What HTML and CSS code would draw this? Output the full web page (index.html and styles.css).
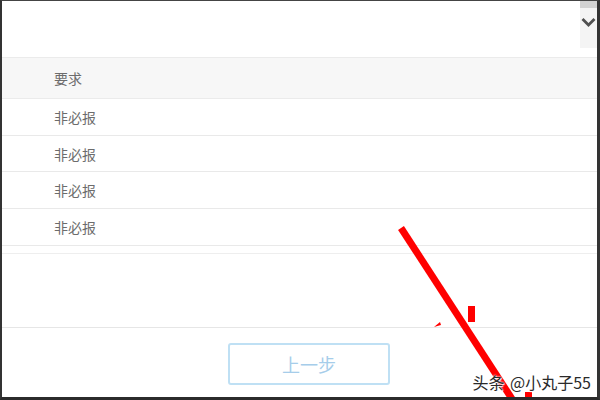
FILE: index.html
```html
<html>
	<head>
		<meta charset="utf-8">
		<link rel="stylesheet" href="styles.css">
	</head>

	<body>
		<div class="frame">
			<div class="top">
				<div class="scroll">
					<div class="thumb"></div>
					<svg class="chev" width="15" height="11" viewBox="0 0 15 11">
						<path d="M1.5 2 L7.5 8 L13.5 2" fill="none" stroke="#505050" stroke-width="2.8"/>
					</svg>
				</div>
			</div>
			<div class="thead">
				<div class="cell">要求</div>
			</div>
			<div class="row"><div class="cell">非必报</div></div>
			<div class="row"><div class="cell">非必报</div></div>
			<div class="row"><div class="cell">非必报</div></div>
			<div class="row"><div class="cell">非必报</div></div>
			<div class="blank"></div>
			<div class="footer">
				<div class="btn">上一步</div>
			</div>

			<svg class="marks" width="600" height="400" viewBox="0 0 600 400">
				<line x1="401" y1="228" x2="514" y2="402" stroke="#ff0000" stroke-width="7"/>
				<rect x="468" y="306" width="7" height="16" fill="#ff0000"/>
				<path d="M434 327 L440 322 L441 325 Z" fill="#ff0000"/>
				<rect x="525" y="392" width="7" height="8" fill="#ff0000"/>
			</svg>
			<div class="wm">头条 @小丸子55</div>
		</div>
	</body>
</html>
```

FILE: styles.css
```css
body,
html {
	margin: 0;
	background-color: #ffffff;
}

.frame {
	position: relative;
	width: 600px;
	height: 400px;
	box-sizing: border-box;
	border-left: 2px solid #333;
	border-right: 3px solid #333;
	border-top: 1px solid #444;
	border-bottom: 3px solid #2b2b2b;
	background-color: #fff;
	overflow: hidden;
	font-family: "Noto Sans CJK SC", "Liberation Sans", sans-serif;
}

.top {
	height: 56px;
	display: flex;
	justify-content: flex-end;
}

.scroll {
	width: 17px;
	height: 48px;
	margin-top: -1px;
	background-color: #f4f4f4;
	display: flex;
	flex-direction: column;
	align-items: center;
}

.thumb {
	width: 17px;
	height: 8px;
	background-color: #d2d2d2;
}

.chev {
	margin-top: 9px;
}

.thead {
	height: 40px;
	background-color: #f7f7f7;
	border-top: 1px solid #ebebeb;
	border-bottom: 1px solid #ebebeb;
	display: flex;
	align-items: center;
}

.row {
	height: 35.7px;
	border-bottom: 1px solid #e9e9e9;
	display: flex;
	align-items: center;
}

.cell {
	padding-left: 52px;
	font-size: 14px;
	color: #6c6c6c;
}

.blank {
	margin-top: 7px;
	height: 73px;
	border-top: 1px solid #eeeeee;
	border-bottom: 1px solid #e6e6e6;
}

.footer {
	padding-top: 15px;
	padding-left: 226px;
}

.btn {
	width: 158px;
	height: 38px;
	border: 2px solid #bfe0f4;
	border-radius: 3px;
	display: flex;
	align-items: center;
	justify-content: center;
	font-size: 18px;
	color: #a6cdea;
}

.marks {
	position: absolute;
	left: -2px;
	top: -1px;
	pointer-events: none;
}

.wm {
	position: absolute;
	right: 6px;
	top: 369px;
	font-size: 16px;
	word-spacing: 2px;
	color: #2a2a2a;
	text-shadow: 0 0 2px #fff, 0 0 2px #fff, 1px 1px 1px #fff;
}
```
